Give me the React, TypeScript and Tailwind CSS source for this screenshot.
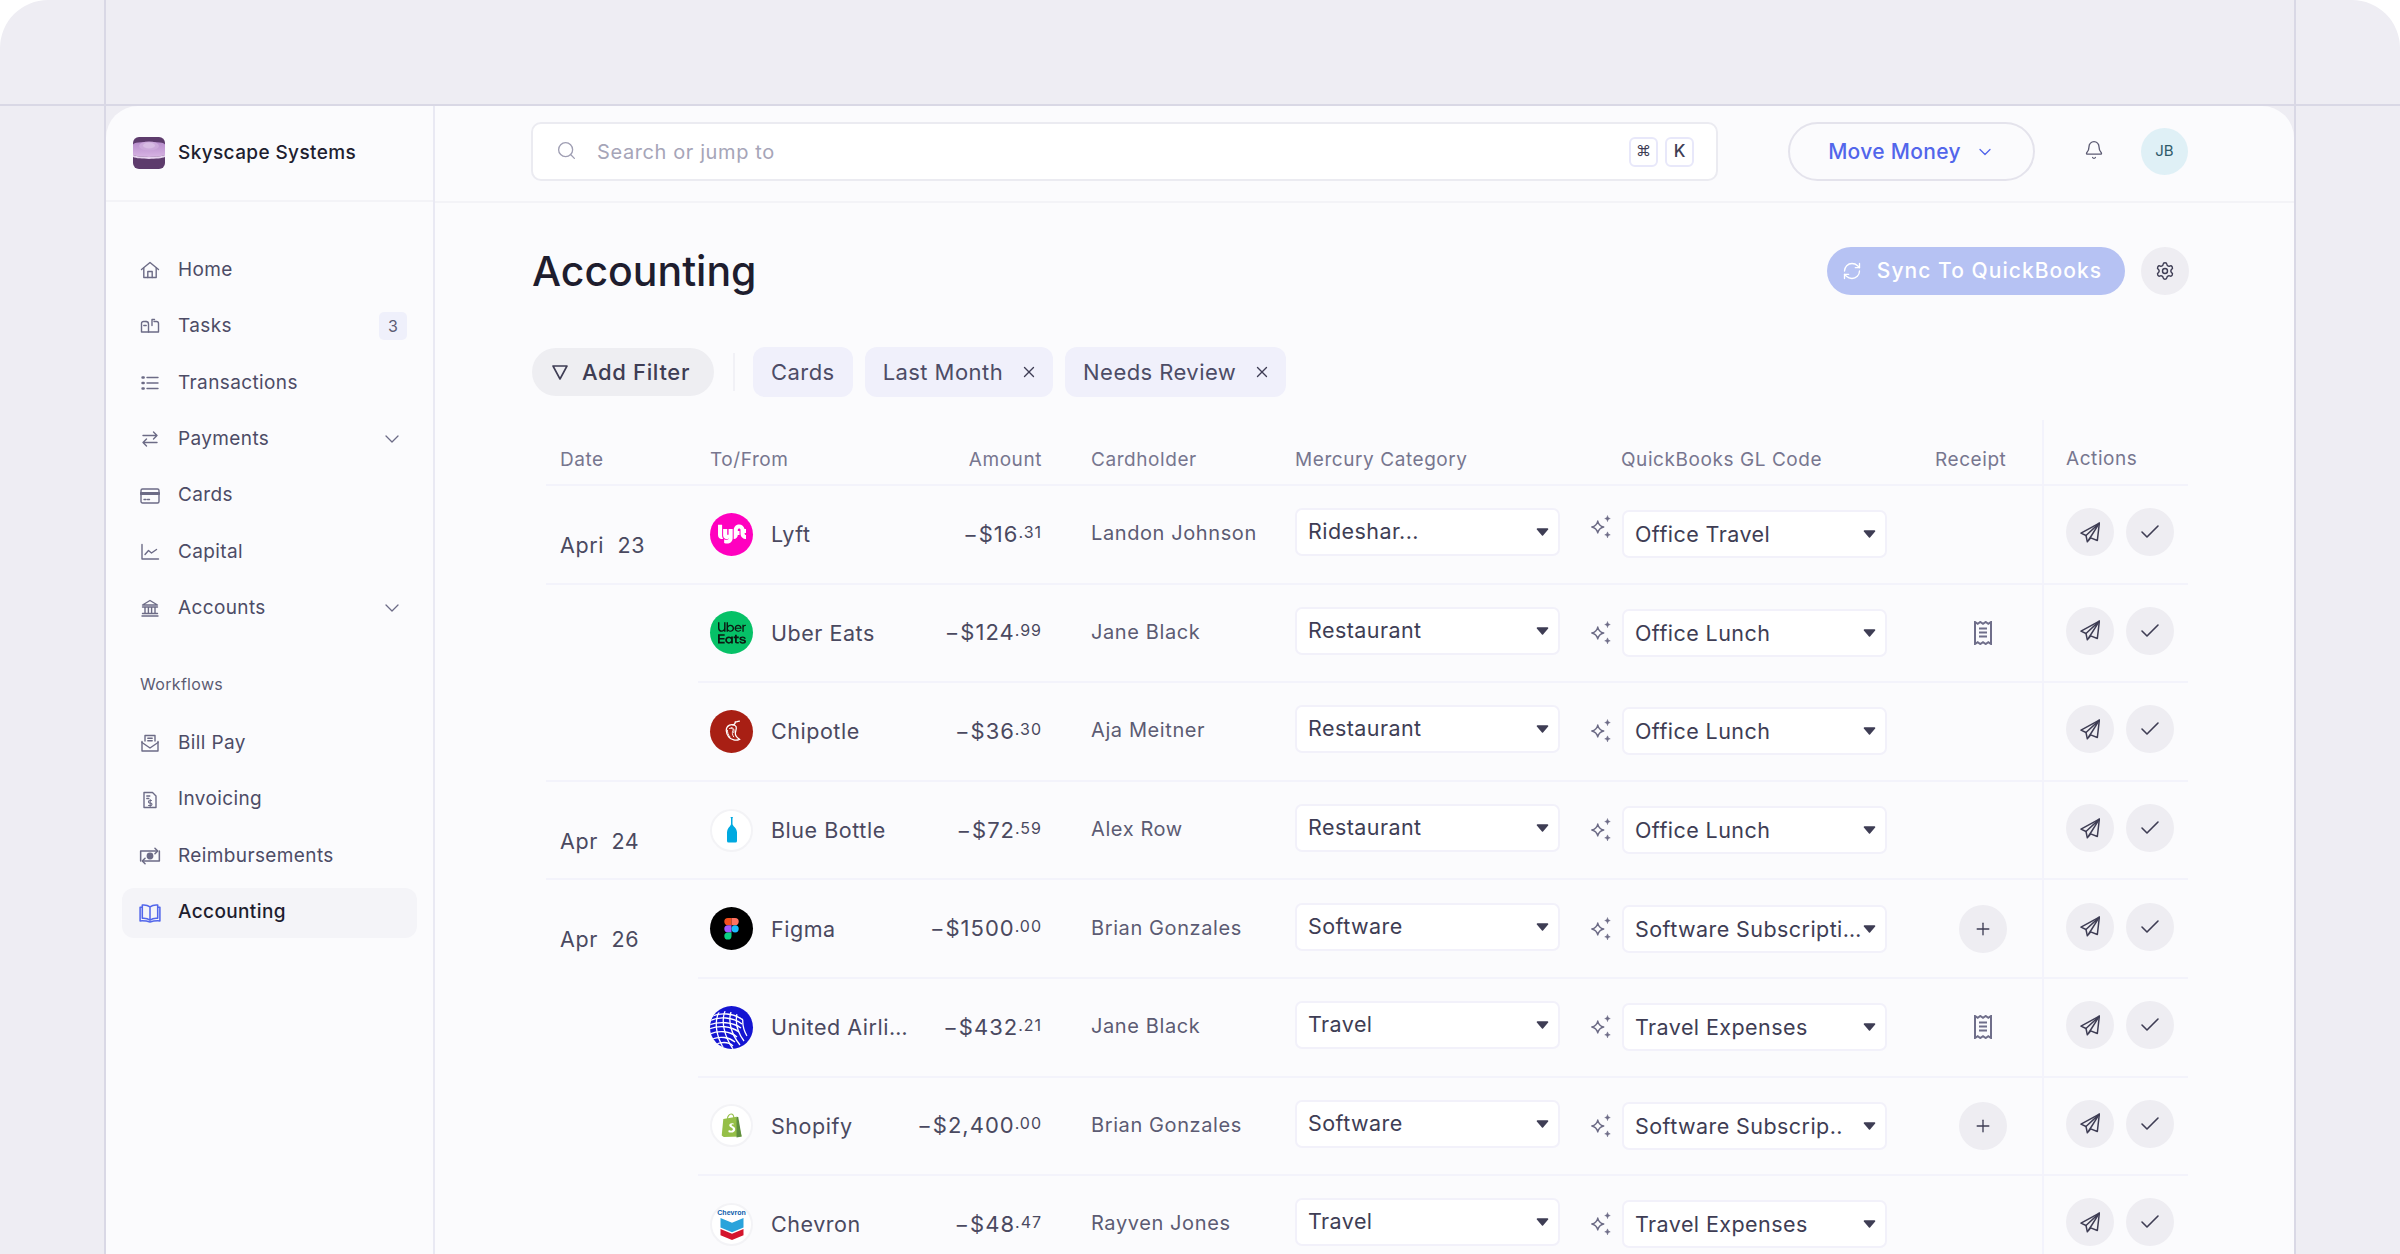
import React from "react";
import { Bell, Check, ChevronDown, Plus, RefreshCw, Search, Settings, X } from "lucide-react";
import { SiLyft, SiUbereats } from "react-icons/si";

const Stroke = ({ children, className = "" }: { children: React.ReactNode; className?: string }) => (
  <svg viewBox="0 0 20 20" fill="none" stroke="currentColor" strokeWidth="1.4" strokeLinecap="round" strokeLinejoin="round" className={`h-5 w-5 shrink-0 ${className}`}>
    {children}
  </svg>
);

const HomeI = () => <Stroke><path d="M1.5 9.5 10 2.5l8.500 7" /><path d="M3.800 8v9.500h12.400V8" /><path d="M7.800 17.500v-6h4.400v6" /></Stroke>;
const TasksI = () => <Stroke><path d="M6 5.500H3.500a2 2 0 0 0-2 2v8.500h17V7.500a2 2 0 0 0-2-2H14" /><path d="M6 5.500a2.500 2.500 0 0 1 2.500 2.500v8" /><path d="M3.800 9.500h2.400" /><path d="M12 9.500V3.500h2.500" /></Stroke>;
const ListI = () => <Stroke><path d="M7 4.500h11M7 10h11M7 15.500h11" /><path d="M2.500 4.500h1.200M2.500 10h1.200M2.500 15.500h1.200" strokeWidth="2.400" /></Stroke>;
const SwapI = () => <Stroke><path d="M3 6.500h14M13.500 3 17 6.500 13.500 10" /><path d="M17 13.500H3M6.500 10 3 13.500 6.500 17" /></Stroke>;
const CardI = () => <Stroke><rect x="1" y="3" width="18" height="14" rx="1.500" /><path d="M1 7.500h18" strokeWidth="2.800" /><path d="M4 13.500h2M7.500 13.500h2" /></Stroke>;
const ChartI = () => <Stroke><path d="M2 2.500V17h16.500" /><path d="M5 12.500 8.500 8.500l3 2.500L16.500 7.500" /></Stroke>;
const BankI = () => <Stroke><path d="M2.500 7 10 2.500 17.500 7z" /><path d="M2.500 9h15M5 9.500v5.500M8.400 9.500v5.500M11.600 9.500v5.500M15 9.500v5.500M2.500 15.500h15M2 18h16" /></Stroke>;
const BillI = () => <Stroke><path d="M5 8V2.500h10V8" /><path d="M7.800 5.200h4.400M7.800 7.800h4.400" /><path d="M2 8.500V18h16V8.500" /><path d="m2 9.500 8 5.500 8-5.500" /></Stroke>;
const InvoiceI = () => <Stroke><path d="M4 2.500h8.500L16 6v11.500H4z" /><path d="M6.800 6h3M6.800 8.500h2" /><path d="M11.500 10.500H9.700a1 1 0 0 0 0 2.500h1a1 1 0 0 1 0 2.500H8.500M10.200 9.500v7" strokeWidth="1.100" /></Stroke>;
const ReimbI = () => <Stroke className="-mx-px h-[22px] w-[22px]"><path d="M1.500 14.500V5.500h15M18.500 5.500v9h-15" /><path d="M14.500 3 17 5.500 14.500 8M5.500 12 3 14.500l2.500 2.500" /><circle cx="10" cy="10" r="2.400" fill="currentColor" /></Stroke>;
const BookI = () => <Stroke className="-mx-px h-[22px] w-[22px]"><path d="M10 4.500C8 3 5.500 2.500 3 2.800v12C5.500 14.500 8 15 10 16.500c2-1.500 4.500-2 7-1.700v-12C14.500 2.500 12 3 10 4.500zM10 4.500v12" /><path d="M3 4.800H1v12.400c3-.2 6 0 9 1 3-1 6-1.200 9-1V4.800h-2" /></Stroke>;

const NavItem = ({ icon, label, active, badge, chevron }: { icon: React.ReactNode; label: string; active?: boolean; badge?: string; chevron?: boolean }) => (
  <div className={`flex h-[50px] items-center gap-[18px] rounded-xl pl-[18px] pr-[10px] text-[19px] ${active ? "bg-[#f4f4f8] font-medium text-[#1e1d2e]" : "text-[#4d4c66]"}`}>
    <span className={active ? "text-[#5266eb]" : "text-[#6c6b86]"}>{icon}</span>
    <span className="flex-1 tracking-[0.02em]">{label}</span>
    {badge && <span className="flex h-[28px] w-[28px] items-center justify-center rounded-[5px] bg-[#eff0fb] text-[16px] text-[#5c5b73]">{badge}</span>}
    {chevron && <ChevronDown className="mr-[3px] h-6 w-6 text-[#6c6b86]" strokeWidth={1.3} />}
  </div>
);

const Logo = () => (
  <svg viewBox="0 0 32 32" className="h-8 w-8 shrink-0">
    <defs>
      <linearGradient id="lg" x1="0" y1="0" x2="0" y2="1">
        <stop offset="0" stopColor="#b68ccb" />
        <stop offset="1" stopColor="#d6b2e2" />
      </linearGradient>
    </defs>
    <rect width="32" height="32" rx="6" fill="#5d3b6c" />
    <path d="M0 8c0-2 3-3 16-3s16 1 16 3v10c-6 2.500-26 2.500-32 0z" fill="url(#lg)" />
    <path d="M0 18c6 2.500 26 2.500 32 0v2c-6 2.500-26 2.500-32 0z" fill="#e6d2ee" />
    <ellipse cx="16" cy="9" rx="10" ry="4.500" fill="#cba8da" />
    <ellipse cx="16" cy="8.500" rx="6" ry="3" fill="#d7bbe3" />
  </svg>
);

const Sidebar = () => (
  <aside className="flex w-[329px] shrink-0 flex-col border-r-2 border-[#e9e9f3]">
    <div className="flex h-[96px] shrink-0 items-center gap-[13px] border-b-2 border-[#f3f3f7] pl-[27px]">
      <Logo />
      <span className="text-[19px] font-medium tracking-[0.02em] text-[#1e1e2f]">Skyscape Systems</span>
    </div>
    <nav className="flex flex-col gap-[6.4px] px-4 pt-[43px]">
      <NavItem icon={<HomeI />} label="Home" />
      <NavItem icon={<TasksI />} label="Tasks" badge="3" />
      <NavItem icon={<ListI />} label="Transactions" />
      <NavItem icon={<SwapI />} label="Payments" chevron />
      <NavItem icon={<CardI />} label="Cards" />
      <NavItem icon={<ChartI />} label="Capital" />
      <NavItem icon={<BankI />} label="Accounts" chevron />
    </nav>
    <div className="mb-[22px] mt-[39px] h-6 pl-[34px] text-[16px] leading-6 tracking-[0.02em] text-[#5c5b73]">Workflows</div>
    <nav className="flex flex-col gap-[6.4px] px-4">
      <NavItem icon={<BillI />} label="Bill Pay" />
      <NavItem icon={<InvoiceI />} label="Invoicing" />
      <NavItem icon={<ReimbI />} label="Reimbursements" />
      <NavItem icon={<BookI />} label="Accounting" active />
    </nav>
  </aside>
);

const Kbd = ({ children, className = "" }: { children: React.ReactNode; className?: string }) => (
  <span className={`flex h-[30px] w-[29px] items-center justify-center rounded-[6px] border-2 border-[#e8e8fa] bg-white text-[#3e3d54] ${className}`}>{children}</span>
);

const Topbar = () => (
  <header className="flex h-[97px] items-start border-b-2 border-[#f3f3f7] pl-[96px] pt-[16px]">
    <div className="flex h-[59px] w-[1187px] items-center rounded-[10px] border-2 border-[#ebebf1] bg-white pl-[23px] pr-[22px]">
      <Search className="-mt-[2px] h-[21px] w-[21px] text-[#9f9eb3]" strokeWidth={1.5} />
      <span className="ml-[20px] flex-1 text-[20px] tracking-[0.03em] text-[#a6a5b8]">Search or jump to</span>
      <div className="flex gap-[7px]">
        <Kbd className="text-[15px]">⌘</Kbd>
        <Kbd className="text-[17px] font-medium">K</Kbd>
      </div>
    </div>
    <button className="ml-[70px] flex h-[59px] w-[247px] items-center justify-center gap-[14px] rounded-full border-2 border-[#e4e3ec] text-[21px] font-medium tracking-[0.015em] text-[#5266eb]">
      Move Money
      <ChevronDown className="h-5 w-5" strokeWidth={1.5} />
    </button>
    <Bell className="ml-[49px] mt-[18px] h-5 w-5 text-[#5c5b73]" strokeWidth={1.6} />
    <div className="ml-[37px] mt-[6px] flex h-[47px] w-[47px] items-center justify-center rounded-full bg-[#dff0f6] text-[15px] text-[#2f5a6a]">JB</div>
  </header>
);

const Chip = ({ label, x }: { label: string; x?: boolean }) => (
  <span className={`flex h-[50px] items-center rounded-xl bg-[#f0f0fb] text-[22px] tracking-[0.02em] text-[#4d4c66] ${x ? "gap-[17px] pl-[18px] pr-[15px]" : "px-[18px]"}`}>
    {label}
    {x && <X className="h-[18px] w-[18px] text-[#3e3d54]" strokeWidth={1.8} />}
  </span>
);

const Sparkles = () => (
  <svg viewBox="0 0 22 24" className="h-[26px] w-[24px] text-[#6c6b86]" fill="none" stroke="currentColor" strokeWidth="1.3" strokeLinejoin="round">
    <path d="M8 6.500c.8 3.500 2 4.700 5.500 5.500-3.500.8-4.700 2-5.500 5.500-.8-3.500-2-4.700-5.500-5.500 3.500-.8 4.700-2 5.500-5.500z" />
    <path d="M17 1.500c.3 1.700 1 2.400 2.500 2.700-1.500.3-2.200 1-2.500 2.700-.3-1.700-1-2.400-2.500-2.700 1.500-.3 2.200-1 2.500-2.700zM17 16.500c.3 1.700 1 2.400 2.500 2.700-1.500.3-2.200 1-2.500 2.700-.3-1.700-1-2.400-2.500-2.700 1.500-.3 2.200-1 2.500-2.700z" fill="currentColor" strokeWidth="0.6" />
  </svg>
);

const Select = ({ label, className = "", textClass = "" }: { label: string; className?: string; textClass?: string }) => (
  <div className={`flex h-[48px] w-[265px] shrink-0 items-center justify-between rounded-[7px] border-2 border-[#f2f1fa] bg-white pl-[11px] pr-[9px] ${className}`}>
    <span className={`whitespace-nowrap text-[21.5px] tracking-[0.02em] text-[#3e3d54] ${textClass}`}>{label}</span>
    <svg viewBox="0 0 14 10" className="h-[10px] w-[13px] shrink-0 text-[#3e3d54]" fill="currentColor"><path d="M1.500 1h11a.8.8 0 0 1 .6 1.300L7.600 8.700a.8.8 0 0 1-1.200 0L.9 2.300A.8.8 0 0 1 1.500 1z" /></svg>
  </div>
);

const ReceiptI = () => (
  <svg viewBox="0 0 18 24" className="h-6 w-[18px] text-[#6f6e8a]" fill="none" stroke="currentColor" strokeWidth="2">
    <path d="M1 1v22l2.700-1.800L6.300 23 9 21.200 11.700 23l2.600-1.800L17 23V1l-2.700 1.800L11.700 1 9 2.800 6.300 1 3.700 2.800z" strokeLinejoin="miter" />
    <path d="M5 7.500h8M5 11.500h8M5 15.500h8" />
  </svg>
);

const PlaneI = () => (
  <svg viewBox="0 0 60 62" className="h-[21px] w-5 text-[#3e3d54]" fill="none" stroke="currentColor" strokeWidth="4.500" strokeLinejoin="round" strokeLinecap="round">
    <path d="M58 3 3 33l15 7 4 19 10-12 20 8z" />
    <path d="M58 3 18 40M58 3 27 52" />
  </svg>
);

const RoundBtn = ({ children }: { children: React.ReactNode }) => (
  <span className="flex h-[48px] w-[48px] items-center justify-center rounded-full bg-[#eeedf2]">{children}</span>
);

const Brand = ({ name }: { name: string }) => {
  const base = "flex h-[43px] w-[43px] shrink-0 items-center justify-center overflow-hidden rounded-full";
  if (name === "Lyft") return <span className={`${base} bg-[#ff00bf] text-white`}><SiLyft className="h-[28px] w-[28px]" /></span>;
  if (name === "Uber") return <span className={`${base} bg-[#06c167] text-[#0b1a12]`}><SiUbereats className="h-[28px] w-[28px]" /></span>;
  if (name === "Chipotle")
    return (
      <span className={`${base} bg-[#a81f14]`}>
        <svg viewBox="0 0 24 28" className="h-[24px] w-[20px]" fill="none" stroke="#fff" strokeWidth="1.500" strokeLinecap="round">
          <path d="M13 7c2-.5 3-2 3-4 2 0 4-1 5-1" />
          <path d="M9 7c3-1.500 7-.5 8 2 .8 2.500-1 5-1 8 0 3 2 5 5 7-4 2-10 1-13-3C5 17 3 10 9 7z" />
          <path d="M9 11c3-1 5 .5 4 3-.8 2-1 4 1 7M6.500 13c0 3 1 6 3 8M11 10c4 0 4 4 3 6" strokeWidth="1.100" />
        </svg>
      </span>
    );
  if (name === "Blue")
    return (
      <span className={`${base} border-2 border-[#f3f3f6] bg-white`}>
        <svg viewBox="0 0 12 26" className="h-[26px] w-[12px]"><path d="M4.500 0h2.500l-.5 1.500V7c0 2 4.500 4 4.500 8.500V24a1.500 1.500 0 0 1-1.500 1.500h-7A1.500 1.500 0 0 1 1 24v-8.500C1 11 5 9 5 7V1.500z" fill="#00a9e0" /></svg>
      </span>
    );
  if (name === "Figma")
    return (
      <span className={`${base} bg-black`}>
        <svg viewBox="0 0 38 58" className="h-[22px] w-[15px]">
          <path d="M0 9.500A9.500 9.500 0 0 1 9.500 0H19v19H9.500A9.500 9.500 0 0 1 0 9.500z" fill="#f24e1e" />
          <path d="M19 0h9.500a9.500 9.500 0 0 1 0 19H19z" fill="#ff7262" />
          <path d="M0 28.500A9.500 9.500 0 0 1 9.500 19H19v19H9.500A9.500 9.500 0 0 1 0 28.500z" fill="#a259ff" />
          <circle cx="28.500" cy="28.500" r="9.500" fill="#1abcfe" />
          <path d="M0 47.500A9.500 9.500 0 0 1 9.500 38H19v9.500a9.500 9.500 0 0 1-19 0z" fill="#0acf83" />
        </svg>
      </span>
    );
  if (name === "United")
    return (
      <span className={`${base} bg-[#1414d2]`}>
        <svg viewBox="0 0 43 43" className="h-[43px] w-[43px]" fill="none" stroke="#fff" strokeWidth="1.300">
          <defs>
            <clipPath id="unitedClip"><circle cx="16" cy="27" r="22" /></clipPath>
          </defs>
          <g clipPath="url(#unitedClip)">
            <path d="M0 11c10-5 24-4 33 3M-1 15c10-5 24-4 33 3M-1 19c10-4 24-3 32 3M-1 23c10-4 22-3 30 3M0 28c9-4 20-3 27 3M2 33c8-3 17-2 23 3M6 38c6-2 13-2 17 2" />
            <path d="M9 6C4 16 6 30 14 43M15 5c-4 10-1 25 8 38M21 6c-3 9 0 22 9 33M27 8c-2 9 1 19 7 27M33 12c-1 7 1 13 4 18" />
          </g>
        </svg>
      </span>
    );
  if (name === "Shopify")
    return (
      <span className={`${base} border-2 border-[#f3f3f6] bg-white`}>
        <svg viewBox="0 0 24 27" className="h-[25px] w-[22px]">
          <path d="M2.500 6.500 17 4l5.500 21.500L3 26 .8 24.500z" fill="#95bf47" />
          <path d="m17 4 1.800.2 3.700 21.300-5.500 1z" fill="#5e8e3e" />
          <path d="M7 6.500C7 3 9.500 1 11 1s3 1.500 3 4.500" fill="none" stroke="#95bf47" strokeWidth="1.200" />
          <path d="M14 11.500c-2.200-1-5-.5-5 1.800 0 2.400 4 2.400 4 4.400 0 1.700-2.500 1.800-4.500.6l-.5 2.200c3 1.500 7.500.8 7.500-3 0-3-4-3-4-4.500 0-.8 1.300-1 2.700-.5z" fill="#fff" />
        </svg>
      </span>
    );
  return (
    <span className={`${base} flex-col border-2 border-[#f3f3f6] bg-white`}>
      <span className="font-['Liberation_Sans'] text-[7px] font-bold leading-[8px] text-[#0b5cab]">Chevron</span>
      <svg viewBox="0 0 24 24" className="h-[23px] w-[24px]">
        <path d="M0 1l12 5 12-5v10l-12 5-12-5z" fill="#2aa3db" />
        <path d="M0 12.500l12 5 12-5V19l-12 5-12-5z" fill="#d4152d" />
      </svg>
    </span>
  );
};

type Row = { logo: string; name: string; amt: string; c: string; who: string; cat: string; gl: string; rec?: "r" | "p" };

const Amount = ({ amt, c }: { amt: string; c: string }) => (
  <span className="whitespace-nowrap text-[22px] tracking-[0.045em] text-[#4a4960]">
    −{amt}
    <span className="align-[4px] text-[16px]">.{c}</span>
  </span>
);

const TableRow = ({ r, last }: { r: Row; last?: boolean }) => (
  <div className={`flex items-center ${last ? "h-[96.6px]" : "h-[98.6px] border-b-2 border-[#f3f3fb]"}`}>
    <div className="flex w-[344px] shrink-0 items-center pl-3">
      <Brand name={r.logo} />
      <span className="ml-[18px] flex-1 truncate text-[21.5px] tracking-[0.025em] text-[#4a4960]">{r.name}</span>
      <Amount amt={r.amt} c={r.c} />
    </div>
    <div className="w-[253px] shrink-0 pb-[2px] pl-[49px] text-[20px] tracking-[0.03em] text-[#5c5b73]">{r.who}</div>
    <Select label={r.cat} className="mb-1" textClass="pb-[2px]" />
    <div className={`flex w-[62px] shrink-0 justify-end pr-[9px] ${r.logo === "Lyft" ? "pb-[14px]" : ""}`}><Sparkles /></div>
    <Select label={r.gl} />
    <div className="flex w-[155px] shrink-0 justify-center pl-[37px]">
      {r.rec === "r" && <ReceiptI />}
      {r.rec === "p" && <RoundBtn><Plus className="h-5 w-5 text-[#3e3d54]" strokeWidth={1.6} /></RoundBtn>}
    </div>
    <div className="flex h-full w-[146px] shrink-0 items-center gap-3 border-l-2 border-[#f3f3fc] pb-1 pl-[22px]">
      <RoundBtn><PlaneI /></RoundBtn>
      <RoundBtn><Check className="h-6 w-6 text-[#3e3d54]" strokeWidth={1.6} /></RoundBtn>
    </div>
  </div>
);

const Group = ({ date, rows }: { date: string; rows: Row[] }) => (
  <div className="flex border-b-2 border-[#f3f3fb]">
    <div className="w-[152px] shrink-0 whitespace-pre pl-[14px] pt-[45px] text-[21.5px] leading-[28px] tracking-[0.03em] text-[#4a4960]">{date}</div>
    <div className="flex-1">
      {rows.map((r, i) => (
        <TableRow key={r.name} r={r} last={i === rows.length - 1} />
      ))}
    </div>
  </div>
);

const HeaderCell = ({ className, children }: { className: string; children: React.ReactNode }) => (
  <div className={`shrink-0 text-[19px] tracking-[0.03em] text-[#77768f] ${className}`}>{children}</div>
);

const g1: Row[] = [{ logo: "Lyft", name: "Lyft", amt: "$16", c: "31", who: "Landon Johnson", cat: "Rideshar...", gl: "Office Travel" }];
const g2: Row[] = [
  { logo: "Uber", name: "Uber Eats", amt: "$124", c: "99", who: "Jane Black", cat: "Restaurant", gl: "Office Lunch", rec: "r" },
  { logo: "Chipotle", name: "Chipotle", amt: "$36", c: "30", who: "Aja Meitner", cat: "Restaurant", gl: "Office Lunch" },
];
const g3: Row[] = [{ logo: "Blue", name: "Blue Bottle", amt: "$72", c: "59", who: "Alex Row", cat: "Restaurant", gl: "Office Lunch" }];
const g4: Row[] = [
  { logo: "Figma", name: "Figma", amt: "$1500", c: "00", who: "Brian Gonzales", cat: "Software", gl: "Software Subscripti…", rec: "p" },
  { logo: "United", name: "United Airli…", amt: "$432", c: "21", who: "Jane Black", cat: "Travel", gl: "Travel Expenses", rec: "r" },
  { logo: "Shopify", name: "Shopify", amt: "$2,400", c: "00", who: "Brian Gonzales", cat: "Software", gl: "Software Subscrip..", rec: "p" },
  { logo: "Chevron", name: "Chevron", amt: "$48", c: "47", who: "Rayven Jones", cat: "Travel", gl: "Travel Expenses" },
];

const Content = () => (
  <main className="pl-[97px] pr-[105px]">
    <div className="flex h-[92px] items-end">
      <h1 className="flex-1 text-[41px] font-medium leading-[48px] text-[#1e1d2e]">Accounting</h1>
      <button className="flex h-[48px] w-[298px] items-center justify-center gap-[15px] rounded-full bg-[#b6c2f3] pr-[8px] text-[21px] font-medium tracking-[0.05em] text-white">
        <RefreshCw className="h-5 w-5" strokeWidth={1.6} />
        Sync To QuickBooks
      </button>
      <span className="ml-4 flex h-[48px] w-[48px] items-center justify-center rounded-full bg-[#eeedf2]">
        <Settings className="h-5 w-5 text-[#3e3d54]" strokeWidth={1.7} />
      </span>
    </div>
    <div className="mt-[52px] flex items-center">
      <button className="flex h-[48px] w-[182px] items-center justify-center gap-[13px] rounded-full bg-[#eeeef2] pr-[5px] text-[22px] font-medium tracking-[0.03em] text-[#3e3d54]">
        <svg viewBox="0 0 18 18" className="h-[18px] w-[18px]" fill="none" stroke="currentColor" strokeWidth="1.600" strokeLinejoin="round"><path d="M2 3h14l-7 13z" /></svg>
        Add Filter
      </button>
      <span className="ml-[19px] mr-[18px] h-[38px] w-[2px] bg-[#f1f1f6]" />
      <div className="flex gap-3">
        <Chip label="Cards" />
        <Chip label="Last Month" x />
        <Chip label="Needs Review" x />
      </div>
    </div>
    <div className="ml-[14px] mt-[23px] w-[1642px]">
      <div className="flex h-[66px] items-end border-b-2 border-[#f3f3fb]">
        <HeaderCell className="w-[152px] pb-[10px] pl-[14px]">Date</HeaderCell>
        <HeaderCell className="w-[344px] pb-[10px] pl-3"><div className="flex justify-between"><span>To/From</span><span>Amount</span></div></HeaderCell>
        <HeaderCell className="w-[253px] pb-[10px] pl-[49px]">Cardholder</HeaderCell>
        <HeaderCell className="w-[326px] pb-[10px]">Mercury Category</HeaderCell>
        <HeaderCell className="w-[314px] pb-[10px]">QuickBooks GL Code</HeaderCell>
        <HeaderCell className="w-[107px] pb-[10px]">Receipt</HeaderCell>
        <HeaderCell className="h-full w-[146px] border-l-2 border-[#f3f3fc] pl-[22px] pt-[25px]">Actions</HeaderCell>
      </div>
      <Group date="Apri  23" rows={g1} />
      <Group date="" rows={g2} />
      <Group date="Apr  24" rows={g3} />
      <Group date="Apr  26" rows={g4} />
    </div>
  </main>
);

export default function App() {
  return (
    <div className="h-screen w-full overflow-hidden bg-white font-['Inter',sans-serif]">
      <div className="flex h-full flex-col rounded-t-[48px] bg-[#eeedf3]">
        <div className="flex h-[106px] shrink-0 border-b-2 border-[#d9d8e5]">
          <div className="w-[106px] border-r-2 border-[#d9d8e5]" />
          <div className="flex-1" />
          <div className="w-[106px] border-l-2 border-[#d9d8e5]" />
        </div>
        <div className="flex min-h-0 flex-1">
          <div className="w-[106px] shrink-0 border-r-2 border-[#d9d8e5]" />
          <div className="flex min-w-0 flex-1 overflow-hidden rounded-t-[32px] bg-[#fbfbfd]">
            <Sidebar />
            <div className="min-w-0 flex-1">
              <Topbar />
              <Content />
            </div>
          </div>
          <div className="w-[106px] shrink-0 border-l-2 border-[#d9d8e5]" />
        </div>
      </div>
    </div>
  );
}
